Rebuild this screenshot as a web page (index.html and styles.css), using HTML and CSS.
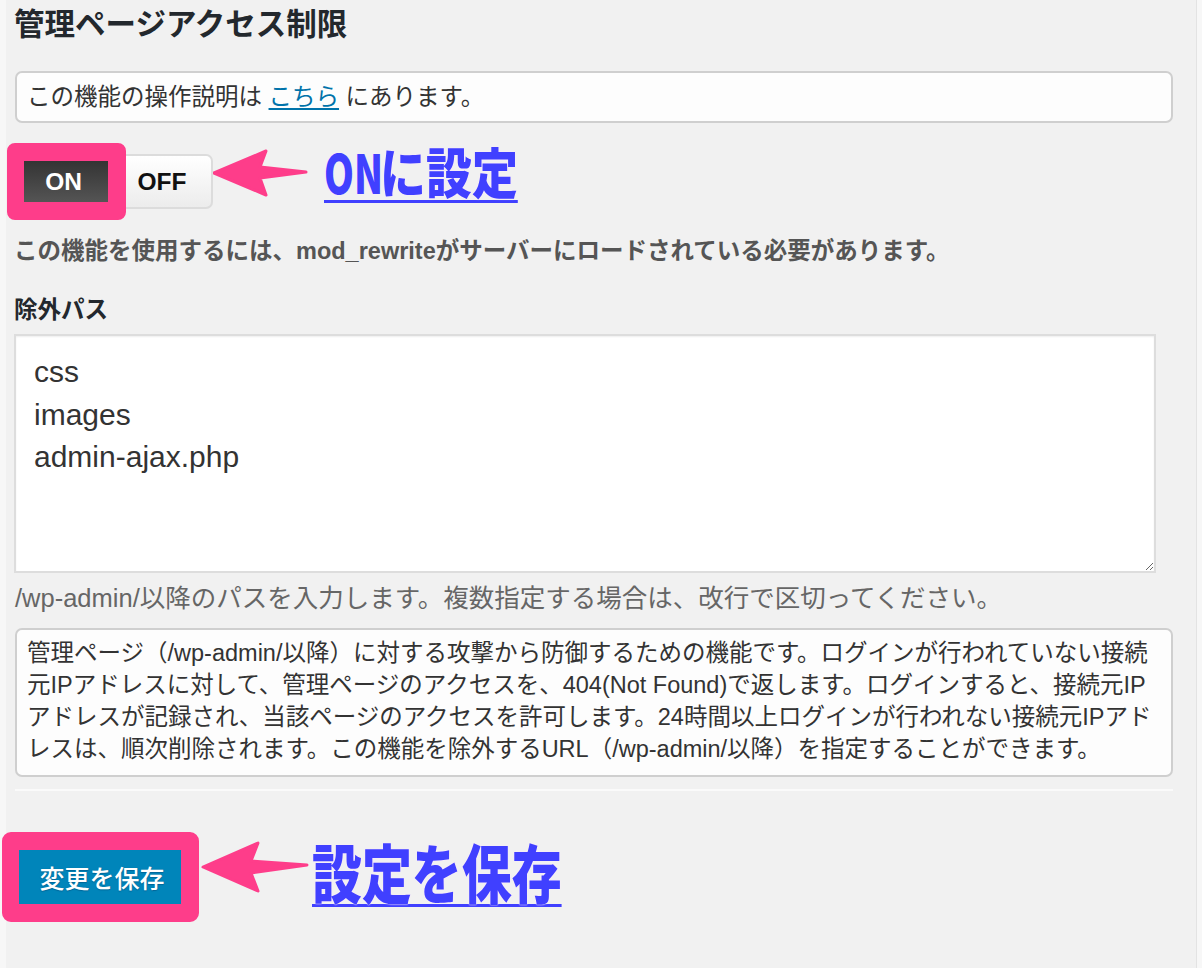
FILE: index.html
```html
<!DOCTYPE html>
<html lang="ja">
<head>
<meta charset="utf-8">
<title>管理ページアクセス制限</title>
<link rel="stylesheet" href="styles.css">
</head>
<body>
<div class="page">
  <h2 class="title">管理ページアクセス制限</h2>

  <div class="info-box">この機能の操作説明は <a href="#" class="link">こちら</a> にあります。</div>

  <div class="toggle-row">
    <div class="switch">
      <span class="seg seg-on">ON</span>
      <span class="seg seg-off">OFF</span>
      <span class="mark mark-toggle"></span>
    </div>
    <svg class="arrow arrow-1" width="96" height="50" viewBox="0 0 96 50">
      <polygon points="2,25 54,3 48,19 94,24 48,30 54,47" fill="#fe3d8a" stroke="#fe3d8a" stroke-width="3" stroke-linejoin="round"/>
    </svg>
    <div class="callout callout-1"><span class="cond">ON</span>に設定</div>
  </div>

  <p class="note">この機能を使用するには、mod_rewriteがサーバーにロードされている必要があります。</p>

  <h3 class="field-label">除外パス</h3>
  <textarea class="paths" readonly>css
images
admin-ajax.php</textarea>
  <p class="helper">/wp-admin/以降のパスを入力します。複数指定する場合は、改行で区切ってください。</p>

  <div class="desc-box">管理ページ（/wp-admin/以降）に対する攻撃から防御するための機能です。ログインが行われていない接続<br>元IPアドレスに対して、管理ページのアクセスを、404(Not Found)で返します。ログインすると、接続元IP<br>アドレスが記録され、当該ページのアクセスを許可します。24時間以上ログインが行われない接続元IPアド<br>レスは、順次削除されます。この機能を除外するURL（/wp-admin/以降）を指定することができます。</div>

  <hr class="divider">

  <div class="save-row">
    <div class="save-wrap">
      <button class="save-btn" type="button">変更を保存</button>
      <span class="mark mark-save"></span>
    </div>
    <svg class="arrow arrow-2" width="108" height="56" viewBox="0 0 108 56">
      <polygon points="2,28 57,4 50,22 106,26 50,34 57,52" fill="#fe3d8a" stroke="#fe3d8a" stroke-width="3" stroke-linejoin="round"/>
    </svg>
    <div class="callout callout-2">設定を保存</div>
  </div>
</div>
</body>
</html>
```

FILE: styles.css
```css
html, body {
  margin: 0;
  padding: 0;
}

body {
  background: #f7f7f7;
  font-family: "Liberation Sans", "Noto Sans CJK JP", sans-serif;
  color: #333;
  font-size: 23.5px;
}

.page {
  margin-left: 6px;
  width: 1181px;
  min-height: 968px;
  padding-left: 9px;
  background: #f1f1f1;
  border-right: 1px solid #e3e3e3;
}

.title {
  margin: 0 0 0 -1px;
  font-size: 30.5px;
  line-height: 48px;
  font-weight: 700;
  color: #23282d;
}

.info-box {
  margin-top: 23px;
  width: 1134px;
  padding: 9px 10px;
  line-height: 30px;
  background: #fdfdfd;
  border: 2px solid #cfcfcf;
  border-radius: 7px;
  color: #333;
}

.link {
  color: #0073aa;
  text-decoration: underline;
  text-underline-offset: 3px;
}

.toggle-row {
  margin-top: 31px;
  display: flex;
  align-items: flex-start;
}

.switch {
  position: relative;
  display: flex;
  height: 55px;
}

.seg {
  display: flex;
  align-items: center;
  justify-content: center;
  font-weight: 700;
  font-size: 24.5px;
  box-sizing: border-box;
  height: 55px;
}

.seg-on {
  width: 93px;
  padding-left: 4px;
  color: #fff;
  background: linear-gradient(#2e2e2e, #5a5a5a);
  border-radius: 5px 0 0 5px;
}

.seg-off {
  width: 105px;
  padding-left: 5px;
  color: #111;
  background: linear-gradient(#ffffff, #ececec);
  border: 2px solid #dcdcdc;
  border-left: none;
  border-radius: 0 7px 7px 0;
}

.mark {
  position: absolute;
  box-sizing: border-box;
  border-style: solid;
  border-color: #fe3d8a;
}

.mark-toggle {
  left: -8px;
  top: -11px;
  width: 119px;
  height: 77px;
  border-width: 18px 18px 18px 17px;
  border-radius: 8px;
}

.arrow {
  display: block;
  flex: none;
}

.arrow-1 {
  margin-top: -6px;
  margin-left: -1px;
}

.callout {
  display: inline-block;
  color: #4040ff;
  font-family: "Noto Sans CJK JP", sans-serif;
  font-weight: 900;
  line-height: 1;
  white-space: nowrap;
  transform-origin: left top;
  text-shadow: 0 0 2px #fbe8ff, 0 0 1px #fbe8ff;
}

.callout-1 {
  margin-top: -10px;
  margin-left: 16px;
  font-size: 54px;
  padding-bottom: 2px;
  border-bottom: 3px solid #4040ff;
  transform: scaleX(0.85);
}

.cond {
  display: inline-block;
  width: 66px;
  transform: scaleX(0.83);
  transform-origin: left center;
}

.note {
  margin: 27px 0 0 -1px;
  line-height: 30px;
  font-weight: 700;
  color: #555;
}

.field-label {
  margin: 29px 0 0 -1px;
  font-size: 23.5px;
  line-height: 30px;
  font-weight: 700;
  color: #23282d;
}

.paths {
  display: block;
  margin: 9px 0 0 -1px;
  width: 1142px;
  height: 239px;
  box-sizing: border-box;
  padding: 15px 18px;
  border: 2px solid #dddddd;
  background: #fff;
  box-shadow: inset 0 1px 2px rgba(0, 0, 0, 0.07);
  font-family: "Liberation Sans", "Noto Sans CJK JP", sans-serif;
  font-size: 30px;
  line-height: 42.5px;
  color: #333;
  resize: both;
  outline: none;
}

.helper {
  margin: 10px 0 0;
  font-size: 25.5px;
  line-height: 30px;
  color: #666;
}

.desc-box {
  margin-top: 15px;
  width: 1134px;
  padding: 7px 10px 10px;
  line-height: 32px;
  background: #fdfdfd;
  border: 2px solid #cfcfcf;
  border-radius: 7px;
  color: #333;
  white-space: nowrap;
}

.divider {
  margin: 12px 0 0;
  width: 1158px;
  height: 2px;
  border: none;
  background: #fafafa;
}

.save-row {
  margin-top: 59px;
  display: flex;
  align-items: flex-start;
}

.save-wrap {
  position: relative;
  margin-left: 4px;
}

.save-btn {
  display: block;
  width: 162px;
  height: 54px;
  padding: 0 0 0 4px;
  border: none;
  background: #0085ba;
  color: #fff;
  font-family: "Liberation Sans", "Noto Sans CJK JP", sans-serif;
  font-size: 25px;
  font-weight: 500;
  text-shadow: 0 1px 1px #006799, 0 0 1px #006799;
}

.mark-save {
  left: -17px;
  top: -18px;
  width: 197px;
  height: 90px;
  border-width: 18px 18px 18px 17px;
  border-radius: 9px;
}

.arrow-2 {
  margin-top: -11px;
  margin-left: 20px;
}

.callout-2 {
  margin-top: -12px;
  margin-left: 3px;
  font-size: 64px;
  padding-bottom: 2px;
  border-bottom: 3px solid #4040ff;
  transform: scaleX(0.78);
}
```
